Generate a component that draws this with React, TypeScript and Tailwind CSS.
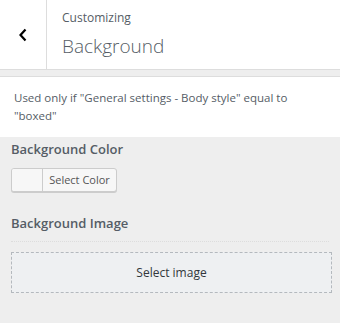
export default function App() {
  return (
    <div
      className="w-[340px] h-[323px] bg-[#eeeeee] text-[#555d66] overflow-hidden"
      style={{ fontFamily: '"Open Sans", "Noto Sans", sans-serif' }}
    >
      <div className="flex h-[70px] bg-white border-b border-[#dddddd]">
        <button className="w-[47px] h-full flex items-center justify-center border-r border-[#dddddd] text-black">
          <svg width="10" height="14" viewBox="0 0 10 14" fill="none">
            <path d="M7.5 1.5 L2.5 7 L7.5 12.5" stroke="currentColor" strokeWidth="2.2" />
          </svg>
        </button>
        <div className="flex flex-col pl-[15px] pt-[9px]">
          <span className="text-[12px] leading-[18px]">Customizing</span>
          <span className="text-[19px] leading-[28px] font-light mt-[5px]">Background</span>
        </div>
      </div>
      <div className="h-[7px] border-b border-[#dddddd]" />
      <div className="bg-white px-[14px] pt-[12px] pb-[10px] h-[60px]">
        <p className="max-w-[285px] text-[11.5px] leading-[18px] text-[#555d66]">
          Used only if "General settings - Body style" equal to "boxed"
        </p>
      </div>
      <div className="px-[11px]">
        <div className="text-[13px] font-semibold leading-[20px] mt-[2px] text-[#555d66]">
          Background Color
        </div>
        <div className="mt-[9px] flex h-[24px] w-[106px] rounded-[3px] border border-[#cccccc] bg-[#f7f7f7] overflow-hidden shadow-[0_1px_0_#cccccc]">
          <div className="w-[31px] border-r border-[#cccccc] bg-[#f7f7f7]" />
          <div className="flex-1 flex items-center justify-center text-[11px] text-[#555555]">
            Select Color
          </div>
        </div>
        <div className="text-[13px] font-semibold leading-[20px] mt-[21px] text-[#555d66]">
          Background Image
        </div>
        <div className="mt-[8px] border-t border-dotted border-[#dddddd]" />
        <div className="mt-[10px] h-[41px] w-[321px] border border-dashed border-[#b4b9be] bg-[#eef0f2] flex items-center justify-center text-[12px] text-[#32373c]">
          Select image
        </div>
      </div>
    </div>
  );
}
